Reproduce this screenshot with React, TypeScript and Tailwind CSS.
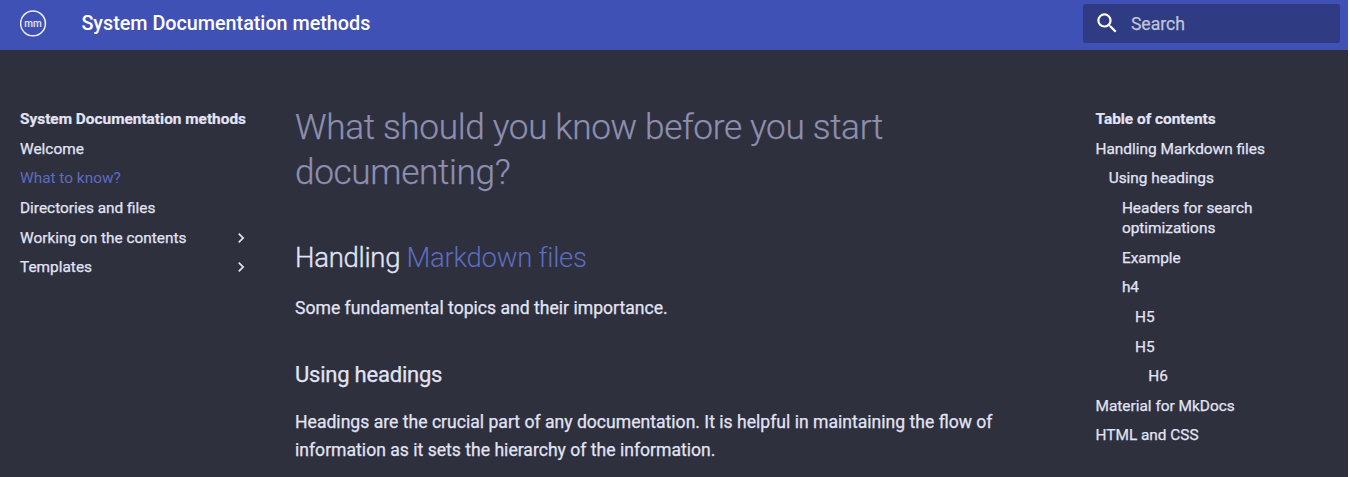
import React from "react";

type NavEntry = { label: string; active?: boolean; nested?: boolean };
type TocEntry = { label: string; indent: string };

const nav: NavEntry[] = [
  { label: "Welcome" },
  { label: "What to know?", active: true },
  { label: "Directories and files" },
  { label: "Working on the contents", nested: true },
  { label: "Templates", nested: true },
];

const toc: TocEntry[] = [
  { label: "Handling Markdown files", indent: "pl-0" },
  { label: "Using headings", indent: "pl-[13.2px]" },
  { label: "Headers for search optimizations", indent: "pl-[26.4px]" },
  { label: "Example", indent: "pl-[26.4px]" },
  { label: "h4", indent: "pl-[26.4px]" },
  { label: "H5", indent: "pl-[39.6px]" },
  { label: "H5", indent: "pl-[39.6px]" },
  { label: "H6", indent: "pl-[52.8px]" },
  { label: "Material for MkDocs", indent: "pl-0" },
  { label: "HTML and CSS", indent: "pl-0" },
];

function Header() {
  return (
    <header className="flex h-[50px] items-start bg-[#4051b5] text-white">
      <svg className="ml-5 mt-[9px] h-7 w-7 shrink-0" viewBox="0 0 28 28" fill="none">
        <circle cx="13" cy="14.4" r="12.4" stroke="#eef0fa" strokeWidth="1.5" />
        <text x="13.1" y="18.2" textAnchor="middle" fill="#e4e7f6" fontFamily="Roboto" fontSize="10.4" fontWeight="500" textLength="17.5" lengthAdjust="spacingAndGlyphs">mm</text>
      </svg>
      <div className="ml-[33.4px] mt-[10px] grow text-[19.8px] leading-7 font-medium tracking-[-0.02px]">System Documentation methods</div>
      <div className="mr-2 mt-1 flex h-[39px] w-[257px] items-center rounded-[2px] bg-[#2f3c84] pl-[10.5px]">
        <svg className="-mt-px h-[26.4px] w-[26.4px]" viewBox="0 0 24 24" fill="white">
          <path d="M9.5 3A6.5 6.5 0 0 1 16 9.5c0 1.61-.59 3.09-1.56 4.23l.27.27h.79l5 5-1.5 1.5-5-5v-.79l-.27-.27A6.516 6.516 0 0 1 9.5 16 6.5 6.5 0 0 1 3 9.5 6.5 6.5 0 0 1 9.5 3m0 2C7 5 5 7 5 9.5S7 14 9.5 14 14 12 14 9.5 12 5 9.5 5Z" />
        </svg>
        <span className="ml-[11px] mt-px text-[17.6px] text-[#c0c4da] [-webkit-text-stroke:0.25px]">Search</span>
      </div>
    </header>
  );
}

export default function App() {
  return (
    <div className="h-[477px] overflow-hidden bg-white pr-[2px] font-['Roboto',sans-serif] text-[#e2e4f6]">
      <Header />
      <div className="flex h-[427px] bg-[#2e303e]">
        <nav className="w-[295px] shrink-0 pl-5 pt-[59px] text-[15.4px] leading-[20.02px]">
          <div className="font-bold [-webkit-text-stroke:0.2px]">System Documentation methods</div>
          {nav.map((n) => (
            <div
              key={n.label}
              className={
                n.active
                  ? "mt-[9.625px] text-[#5d6cc0]"
                  : "mt-[9.625px] flex w-[231px] justify-between [-webkit-text-stroke:0.25px]"
              }
            >
              <span>{n.label}</span>
              {n.nested && (
                <svg className="h-5 w-5" viewBox="0 0 24 24" fill="currentColor">
                  <path d="M8.59 16.58 13.17 12 8.59 7.41 10 6l6 6-6 6-1.41-1.42Z" />
                </svg>
              )}
            </div>
          ))}
        </nav>
        <main className="w-[740px] shrink-0 pt-[55px] text-[17.6px] leading-[28px] [-webkit-text-stroke:0.25px]">
          <h1 className="text-[35.2px] leading-[45px] font-light tracking-[-0.352px] text-[#8d8fb0]">
            What should you know before you start<br />documenting?
          </h1>
          <h2 className="mt-[43.6px] text-[27.5px] leading-[38.5px] font-light tracking-[-0.275px]">
            <span className="[-webkit-text-stroke:0.35px]">Handling</span>{" "}
            <span className="text-[#5d6cc0] [-webkit-text-stroke:0px]">Markdown files</span>
          </h2>
          <p className="mt-[17px]">Some fundamental topics and their importance.</p>
          <h3 className="mt-[36px] text-[22px] leading-[33px] tracking-[-0.22px]">Using headings</h3>
          <p className="mt-[17px]">
            Headings are the crucial part of any documentation. It is helpful in maintaining the flow of<br />
            information as it sets the hierarchy of the information.
          </p>
        </main>
        <aside className="ml-[60.5px] w-[200px] pt-[59px] text-[15.4px] leading-[20.02px]">
          <div className="font-bold [-webkit-text-stroke:0.2px]">Table of contents</div>
          {toc.map((t, i) => (
            <div key={i} className={"mt-[9.625px] [-webkit-text-stroke:0.25px] " + t.indent}>{t.label}</div>
          ))}
        </aside>
      </div>
    </div>
  );
}
